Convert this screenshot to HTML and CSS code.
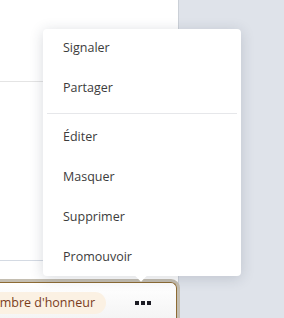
FILE: index.html
```html
<!DOCTYPE html>
<html lang="fr">
<head>
  <meta charset="UTF-8">
  <meta name="viewport" content="width=device-width, initial-scale=1.0">
  <title>Menu de publication</title>
  <link rel="stylesheet" href="styles.css">
</head>
<body>
  <div class="feed">
    <div class="post">
      <div class="post-head"></div>
      <div class="post-body"></div>
      <div class="post-gap"></div>
      <div class="post-footer">
        <span class="badge">Membre d'honneur</span>
        <button class="more" aria-label="Plus d'options">
          <span></span><span></span><span></span>
        </button>
      </div>
    </div>
  </div>

  <div class="menu">
    <a href="#">Signaler</a>
    <a href="#">Partager</a>
    <div class="menu-sep"></div>
    <a href="#">Éditer</a>
    <a href="#">Masquer</a>
    <a href="#">Supprimer</a>
    <a href="#">Promouvoir</a>
    <div class="menu-arrow"></div>
  </div>
</body>
</html>
```

FILE: styles.css
```css
html, body {
  margin: 0;
  height: 100%;
  overflow: hidden;
}
body {
  font-family: 'Open Sans', 'Noto Sans', sans-serif;
  background: #dfe3ea;
  color: #3c3c3c;
  position: relative;
}
.feed {
  height: 100%;
}
.post {
  width: 178px;
  height: 100%;
  background: #fff;
  border-right: 1px solid #cbd0d7;
  display: flex;
  flex-direction: column;
}
.post > div {
  flex-shrink: 0;
}
.post-head {
  height: 81px;
  border-bottom: 1px solid #e4e4e4;
}
.post-body {
  height: 178px;
  border-bottom: 1px solid #d4dae3;
}
.post-gap {
  height: 21px;
}
.post-footer {
  margin-left: -42px;
  width: 219px;
  box-sizing: border-box;
  height: 37px;
  border: 1px solid #8d6b34;
  border-bottom: none;
  border-radius: 6px 6px 0 0;
  box-shadow: 0 0 0 3px #c4beb1;
  background: linear-gradient(#fff, #f4f4f4);
  display: flex;
  align-items: flex-start;
  justify-content: flex-end;
  gap: 21px;
  padding: 9px 17px 0 0;
}
.badge {
  height: 22px;
  line-height: 22px;
  padding: 0 11px;
  border-radius: 11px;
  background: #fbf1e3;
  color: #7a3d1c;
  font-size: 12.5px;
  white-space: nowrap;
}
.more {
  width: 32px;
  height: 22px;
  padding: 0;
  border: none;
  background: none;
  display: flex;
  align-items: center;
  justify-content: center;
  gap: 2px;
  cursor: pointer;
}
.more span {
  width: 4px;
  height: 4px;
  background: #1c1c24;
}
.menu {
  position: absolute;
  left: 43px;
  top: 29px;
  width: 198px;
  height: 247px;
  background: #fff;
  border-radius: 4px;
  box-shadow: 0 2px 14px rgba(40, 50, 70, 0.18);
  display: flex;
  flex-direction: column;
}
.menu a {
  display: block;
  height: 40px;
  line-height: 38px;
  padding-left: 20px;
  font-size: 12.5px;
  color: #3c3c3c;
  text-decoration: none;
  flex-shrink: 0;
}
.menu a:hover {
  background: #f5f6f8;
}
.menu-sep {
  height: 1px;
  margin: 4px 4px;
  background: #e6e7ea;
  flex-shrink: 0;
}
.menu-arrow {
  position: absolute;
  left: 94px;
  bottom: -4px;
  width: 8px;
  height: 8px;
  background: #fff;
  transform: rotate(45deg);
}
```
